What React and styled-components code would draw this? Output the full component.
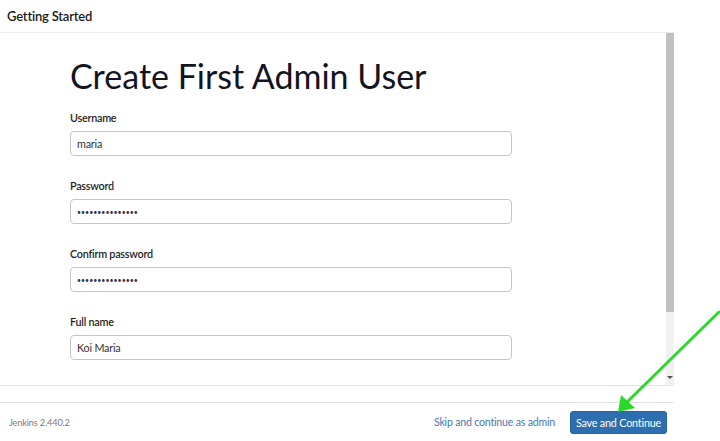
import React from "react";
import styled, { createGlobalStyle } from "styled-components";

const GlobalStyle = createGlobalStyle`
  html, body {
    margin: 0;
    padding: 0;
    background: #ffffff;
    overflow: hidden;
  }
  * {
    box-sizing: border-box;
  }
`;

const Page = styled.div`
  position: relative;
  width: 720px;
  height: 441px;
  font-family: "Lato", "Noto Sans", sans-serif;
  color: #14141f;
  background: #ffffff;
`;

const Dialog = styled.div`
  width: 674px;
  height: 441px;
  display: flex;
  flex-direction: column;
`;

const Header = styled.div`
  height: 33px;
  flex: none;
  display: flex;
  align-items: center;
  padding-left: 7px;
  border-bottom: 1px solid #ececec;
  font-size: 13px;
  letter-spacing: -0.2px;
  font-weight: 600;
  color: #1a1a1a;
`;

const Body = styled.div`
  height: 353px;
  flex: none;
  display: flex;
  border-bottom: 1px solid #e4e4e4;
`;

const Pane = styled.div`
  flex: 1;
  padding: 22px 0 0 70px;
`;

const Title = styled.h1`
  margin: 0 0 14px;
  font-size: 34px;
  line-height: 41px;
  font-weight: 400;
  color: #14141f;
`;

const Field = styled.div`
  display: flex;
  flex-direction: column;
  margin-bottom: 22px;
`;

const Label = styled.label`
  font-size: 10.8px;
  letter-spacing: -0.25px;
  line-height: 16px;
  font-weight: 600;
  color: #1f1f24;
  margin-bottom: 5px;
`;

const Input = styled.input`
  width: 442px;
  height: 25px;
  padding: 0 6px;
  border: 1px solid #c6c6c6;
  border-radius: 4px;
  font-family: inherit;
  font-size: ${(p) => (p.$secret ? "7px" : "10.8px")};
  letter-spacing: ${(p) => (p.$secret ? "0" : "-0.2px")};
  color: #333;
  background: #fff;
  outline: none;
`;

const Scrollbar = styled.div`
  width: 8px;
  flex: none;
  display: flex;
  flex-direction: column;
  background: #f1f1f1;
`;

const Thumb = styled.div`
  height: 279px;
  background: #c1c1c1;
`;

const Track = styled.div`
  flex: 1;
  display: flex;
  align-items: flex-end;
  justify-content: center;
  padding-bottom: 6px;
`;

const DownArrow = styled.div`
  width: 0;
  height: 0;
  border-left: 3px solid transparent;
  border-right: 3px solid transparent;
  border-top: 3px solid #505050;
`;

const Spacer = styled.div`
  height: 16px;
  flex: none;
`;

const Footer = styled.div`
  flex: 1;
  display: flex;
  align-items: center;
  padding: 0 7px 0 9px;
  border-top: 1px solid #e4e4e4;
`;

const Version = styled.span`
  font-size: 9.2px;
  letter-spacing: -0.15px;
  color: #7a7a7a;
  margin-right: auto;
`;

const SkipLink = styled.a`
  font-size: 10.6px;
  letter-spacing: -0.2px;
  color: #4878b0;
  text-decoration: none;
  margin-right: 15px;
  white-space: nowrap;
  cursor: pointer;
`;

const PrimaryButton = styled.button`
  height: 23px;
  width: 97px;
  padding: 0;
  border: 1px solid #26649f;
  border-radius: 3px;
  background: #2d6eae;
  color: #ffffff;
  font-family: inherit;
  font-size: 10.8px;
  letter-spacing: -0.2px;
  white-space: nowrap;
  cursor: pointer;
`;

const Overlay = styled.svg`
  position: absolute;
  left: 0;
  top: 0;
  pointer-events: none;
`;

const fields = [
  { label: "Username", secret: false, value: "maria" },
  { label: "Password", secret: true, value: "•••••••••••••••" },
  { label: "Confirm password", secret: true, value: "•••••••••••••••" },
  { label: "Full name", secret: false, value: "Koi Maria" },
];

export default function App() {
  return (
    <Page>
      <GlobalStyle />
      <Dialog>
        <Header>Getting Started</Header>
        <Body>
          <Pane>
            <Title>Create First Admin User</Title>
            {fields.map((f) => (
              <Field key={f.label}>
                <Label>{f.label}</Label>
                <Input type="text" readOnly value={f.value} $secret={f.secret} />
              </Field>
            ))}
          </Pane>
          <Scrollbar>
            <Thumb />
            <Track>
              <DownArrow />
            </Track>
          </Scrollbar>
        </Body>
        <Spacer />
        <Footer>
          <Version>Jenkins 2.440.2</Version>
          <SkipLink>Skip and continue as admin</SkipLink>
          <PrimaryButton>Save and Continue</PrimaryButton>
        </Footer>
      </Dialog>
      <Overlay width="720" height="441" viewBox="0 0 720 441">
        <line x1="719" y1="312" x2="625" y2="404" stroke="#2bd92b" strokeWidth="3" strokeLinecap="round" />
        <polygon points="618,412 621,395 635,408" fill="#2bd92b" />
      </Overlay>
    </Page>
  );
}
